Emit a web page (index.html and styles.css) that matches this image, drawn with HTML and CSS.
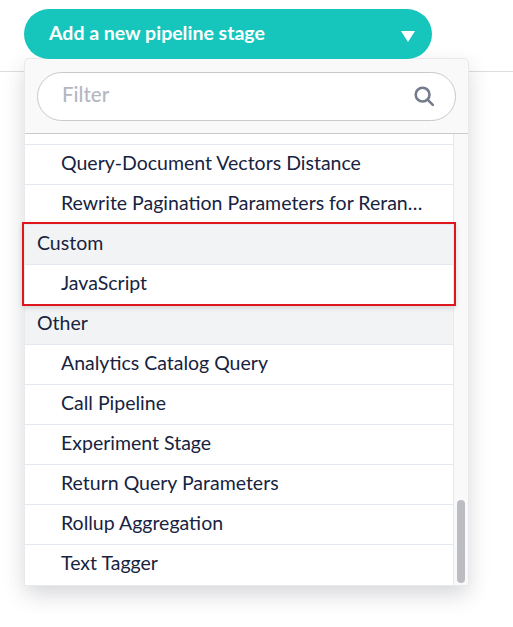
FILE: index.html
```html
<!DOCTYPE html>
<html lang="en">
<head>
<meta charset="utf-8">
<title>Add a new pipeline stage</title>
<link rel="stylesheet" href="styles.css">
</head>
<body>
<header class="toolbar">
  <button class="add-btn" type="button">
    <span>Add a new pipeline stage</span>
    <svg class="caret" width="14" height="11" viewBox="0 0 14 11"><path d="M0 0h14L7 11z" fill="#fff"/></svg>
  </button>
</header>
<div class="menu">
  <div class="filter-bar">
    <div class="filter">
      <span class="filter-text">Filter</span>
      <svg class="search" width="22" height="22" viewBox="0 0 22 22" fill="none" stroke="#747b8c" stroke-width="2.6"><circle cx="9.6" cy="9.6" r="6.9"/><path d="M14.8 14.8l5 5" stroke-linecap="round"/></svg>
    </div>
  </div>
  <div class="body">
    <ul class="list">
      <li class="item stub"></li>
      <li class="item">Query-Document Vectors Distance</li>
      <li class="item">Rewrite Pagination Parameters for Reran…</li>
      <li class="group">Custom</li>
      <li class="item">JavaScript</li>
      <li class="group">Other</li>
      <li class="item">Analytics Catalog Query</li>
      <li class="item">Call Pipeline</li>
      <li class="item">Experiment Stage</li>
      <li class="item">Return Query Parameters</li>
      <li class="item">Rollup Aggregation</li>
      <li class="item last">Text Tagger</li>
    </ul>
    <div class="scrollbar"><div class="thumb"></div></div>
  </div>
  <div class="highlight"></div>
</div>
</body>
</html>
```
FILE: styles.css
```css
html, body {
  margin: 0;
  padding: 0;
  background: #fff;
}
body {
  height: 627px;
  overflow: hidden;
  position: relative;
  font-family: Lato, "Liberation Sans", sans-serif;
  color: #17233f;
}
.toolbar {
  height: 62px;
  padding: 9px 0 0 24px;
  border-bottom: 1px solid #dcdde0;
}
.add-btn {
  position: relative;
  z-index: 1;
  display: flex;
  align-items: center;
  justify-content: space-between;
  width: 408px;
  height: 50px;
  padding: 0 17px 3px 25px;
  border: 0;
  border-radius: 25px;
  background: #16c5bb;
  color: #fff;
  font: 700 19.5px Lato, sans-serif;
}
.caret {
  margin-top: 7px;
}
.menu {
  position: absolute;
  left: 25px;
  top: 59px;
  width: 443px;
  height: 526px;
  box-sizing: border-box;
  display: flex;
  flex-direction: column;
  background: #f9f9f9;
  border-radius: 4px 4px 0 0;
  box-shadow: 0 0 0 1px #e9e9eb, 0 9px 22px rgba(40, 45, 60, 0.2);
}
.filter-bar {
  height: 75px;
  box-sizing: border-box;
  padding: 13px 12px 0;
  border-bottom: 1px solid #c9cacd;
}
.filter {
  display: flex;
  align-items: center;
  justify-content: space-between;
  height: 49px;
  box-sizing: border-box;
  padding: 0 20px 5px 24px;
  border: 1px solid #c8c9cd;
  border-radius: 25px;
  background: #fff;
}
.filter-text {
  font-size: 20.5px;
  color: #b4b7c0;
  font-weight: 500;
}
.search {
  margin-top: 3px;
}
.body {
  display: flex;
  flex: 1;
  min-height: 0;
}
.list {
  flex: 1;
  margin: 0;
  padding: 0;
  list-style: none;
  background: #fff;
  border-right: 1px solid #e8e9ec;
}
.item, .group {
  height: 40px;
  box-sizing: border-box;
  border-bottom: 1px solid #e4e8f0;
  font-size: 19.5px;
  line-height: 35px;
  white-space: nowrap;
}
.item {
  padding-left: 36px;
}
.group {
  padding-left: 12px;
  background: #f2f3f5;
}
.item.stub {
  height: 11px;
}
.item.last {
  border-bottom: 0;
}
.scrollbar {
  display: flex;
  flex-direction: column;
  justify-content: flex-end;
  width: 14px;
  padding-bottom: 2px;
  box-sizing: border-box;
  align-items: center;
}
.thumb {
  width: 8px;
  height: 83px;
  border-radius: 4px;
  background: #bcbdc2;
}
.highlight {
  position: absolute;
  left: -3px;
  top: 163px;
  width: 430px;
  height: 80px;
  border: 2px solid #e0161d;
  box-shadow: 0 2px 5px rgba(40, 45, 60, 0.15);
}
```
